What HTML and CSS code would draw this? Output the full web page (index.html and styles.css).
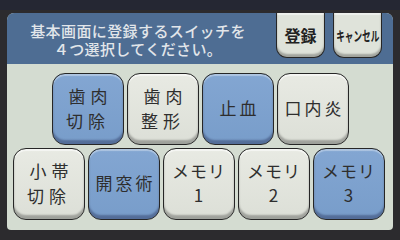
FILE: index.html
```html
<!DOCTYPE html>
<html lang="ja">
<head>
<meta charset="utf-8">
<link rel="stylesheet" href="styles.css">
</head>
<body>
<div class="topstrip"></div>
<div class="panel">
  <div class="header">
    <div class="msg">
      <div class="line">基本画面に登録するスイッチを</div>
      <div class="line">４つ選択してください。</div>
    </div>
    <div class="tabs">
      <div class="tab tab-reg">登録</div>
      <div class="tab tab-cancel"><span class="squeeze">キャンセル</span></div>
    </div>
  </div>
  <div class="body">
    <div class="row row1">
      <div class="btn on two">歯肉<br>切除</div>
      <div class="btn two">歯肉<br>整形</div>
      <div class="btn on one">止血</div>
      <div class="btn one">口内炎</div>
    </div>
    <div class="row row2">
      <div class="btn two">小帯<br>切除</div>
      <div class="btn on one">開窓術</div>
      <div class="btn mem">メモリ<br>1</div>
      <div class="btn mem">メモリ<br>2</div>
      <div class="btn on mem">メモリ<br>3</div>
    </div>
  </div>
</div>
</body>
</html>
```

FILE: styles.css
```css
html, body {
  margin: 0;
  padding: 0;
}
body {
  width: 400px;
  height: 240px;
  background: #2c2b2e;
  font-family: "Noto Sans CJK JP", "Noto Sans", sans-serif;
  overflow: hidden;
}
.topstrip {
  height: 10px;
  background: #252733;
}
.panel {
  margin: 3px 0 0 7px;
  width: 386px;
  height: 217px;
  background: #d4dcd1;
  border-radius: 7px 7px 4px 4px;
  overflow: hidden;
  display: flex;
  flex-direction: column;
}
.header {
  height: 51px;
  background: #4e6d93;
  display: flex;
  flex-direction: row;
}
.msg {
  width: 262px;
  color: #e2e6ea;
  font-size: 15px;
  font-weight: 500;
  text-align: center;
  padding-top: 9px;
  box-sizing: border-box;
  letter-spacing: 0.4px;
  display: flex;
  flex-direction: column;
}
.line {
  height: 18px;
  line-height: 18px;
  white-space: nowrap;
}
.tabs {
  display: flex;
  gap: 8px;
  padding-left: 7px;
}
.tab {
  width: 49px;
  height: 45px;
  box-sizing: border-box;
  background: #dfe3da;
  border: 1.5px solid #262626;
  border-top: none;
  border-radius: 0 0 11px 11px;
  box-shadow: inset 0 -3px 2px rgba(0,0,0,0.28), inset 0 2px 1px rgba(255,255,255,0.5);
  display: flex;
  align-items: center;
  justify-content: center;
  color: #222;
}
.tab-reg {
  font-size: 16px;
  font-weight: 700;
}
.squeeze {
  display: inline-block;
  font-size: 13.5px;
  font-weight: 700;
  transform: scaleX(0.64);
  white-space: nowrap;
}
.body {
  display: flex;
  flex-direction: column;
  gap: 3px;
  padding-top: 9px;
}
.row {
  display: flex;
  gap: 3px;
}
.row1 {
  padding-left: 45px;
}
.row2 {
  padding-left: 6px;
}
.btn {
  width: 72px;
  height: 72px;
  box-sizing: border-box;
  border: 1.5px solid #262626;
  border-radius: 13px;
  background: linear-gradient(#e8eae3, #dcdfd7);
  box-shadow: inset 0 -4px 2px rgba(0,0,0,0.28), inset 0 2px 1px rgba(255,255,255,0.6);
  color: #2e2e2e;
  display: flex;
  align-items: center;
  justify-content: center;
  text-align: center;
  font-size: 17px;
  line-height: 25px;
  padding-bottom: 3px;
}
.btn.on {
  background: linear-gradient(#83a6d2, #789dca);
  box-shadow: inset 0 -4px 2px rgba(0,0,40,0.3), inset 0 2px 1px rgba(255,255,255,0.35);
}
.two {
  letter-spacing: 5px;
  text-indent: 5px;
}
.one {
  letter-spacing: 3px;
  text-indent: 3px;
}
.mem {
  letter-spacing: 1px;
  line-height: 24px;
}
```
